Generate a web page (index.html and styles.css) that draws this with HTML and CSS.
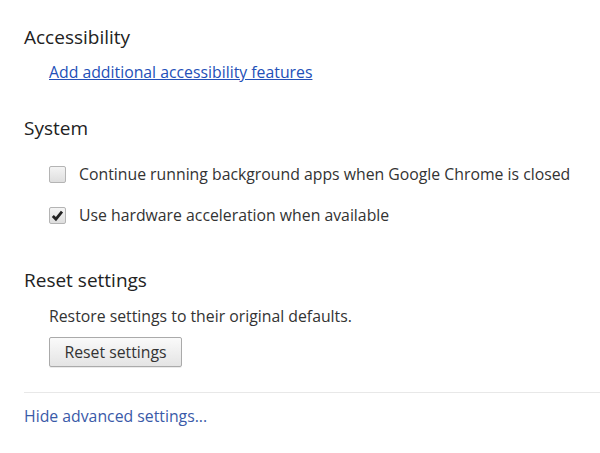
FILE: index.html
```html
<!DOCTYPE html>
<html lang="en">

<head>
  <meta charset="UTF-8">
  <title>Settings</title>
  <link rel="stylesheet" href="styles.css">
</head>

<body>
  <div class="settings">
    <section class="section">
      <h3>Accessibility</h3>
      <div class="section-body">
        <a href="#" class="link">Add additional accessibility features</a>
      </div>
    </section>

    <section class="section">
      <h3>System</h3>
      <div class="section-body">
        <label class="checkbox-row">
          <span class="checkbox"></span>
          <span>Continue running background apps when Google Chrome is closed</span>
        </label>
        <label class="checkbox-row">
          <span class="checkbox checked">
            <svg viewBox="0 0 16 16" width="15" height="15">
              <polyline points="3,8.5 6.3,11.8 12.8,3.8" fill="none" stroke="#222" stroke-width="3"/>
            </svg>
          </span>
          <span>Use hardware acceleration when available</span>
        </label>
      </div>
    </section>

    <section class="section reset">
      <h3>Reset settings</h3>
      <div class="section-body">
        <p class="desc">Restore settings to their original defaults.</p>
        <button class="btn">Reset settings</button>
      </div>
    </section>

    <div class="footer">
      <a href="#" class="footer-link">Hide advanced settings...</a>
    </div>
  </div>
</body>

</html>
```

FILE: styles.css
```css
body {
  margin: 0;
  padding: 0;
  background-color: #fff;
  font-family: "Open Sans", sans-serif;
  font-size: 15.8px;
  color: #333;
}

.settings {
  padding: 25px 0 0 24px;
}

.section h3 {
  margin: 0;
  font-size: 19px;
  font-weight: normal;
  color: #222;
  line-height: 24px;
}

.section-body {
  padding-left: 25px;
}

.section {
  margin-bottom: 33px;
}

.link {
  display: inline-block;
  margin-top: 13px;
  color: #2350b8;
  line-height: 20px;
}

.checkbox-row {
  display: flex;
  align-items: center;
  gap: 13px;
  margin-top: 21px;
  line-height: 20px;
}

.checkbox-row:first-child {
  margin-top: 24px;
}

.checkbox {
  width: 15px;
  height: 15px;
  border: 1px solid #b4b4b4;
  border-radius: 2px;
  background: linear-gradient(#f4f4f4, #dedede);
  display: flex;
  align-items: center;
  justify-content: center;
}

.reset {
  margin-top: 43px;
}

.reset.section {
  margin-bottom: 0;
}

.desc {
  margin: 14px 0 11px;
  line-height: 20px;
}

.btn {
  display: block;
  font-family: "Open Sans", sans-serif;
  font-size: 15.8px;
  color: #333;
  width: 133px;
  height: 30px;
  border: 1px solid #aaa;
  border-radius: 2px;
  background: linear-gradient(#fafafa, #e4e4e4);
  box-shadow: 0 1px 0 rgba(0, 0, 0, 0.08);
}

.footer {
  margin-top: 25px;
  border-top: 1px solid #e8e8e8;
  padding-top: 12px;
}

.footer-link {
  color: #3a5aa8;
  text-decoration: none;
  line-height: 20px;
}
```
